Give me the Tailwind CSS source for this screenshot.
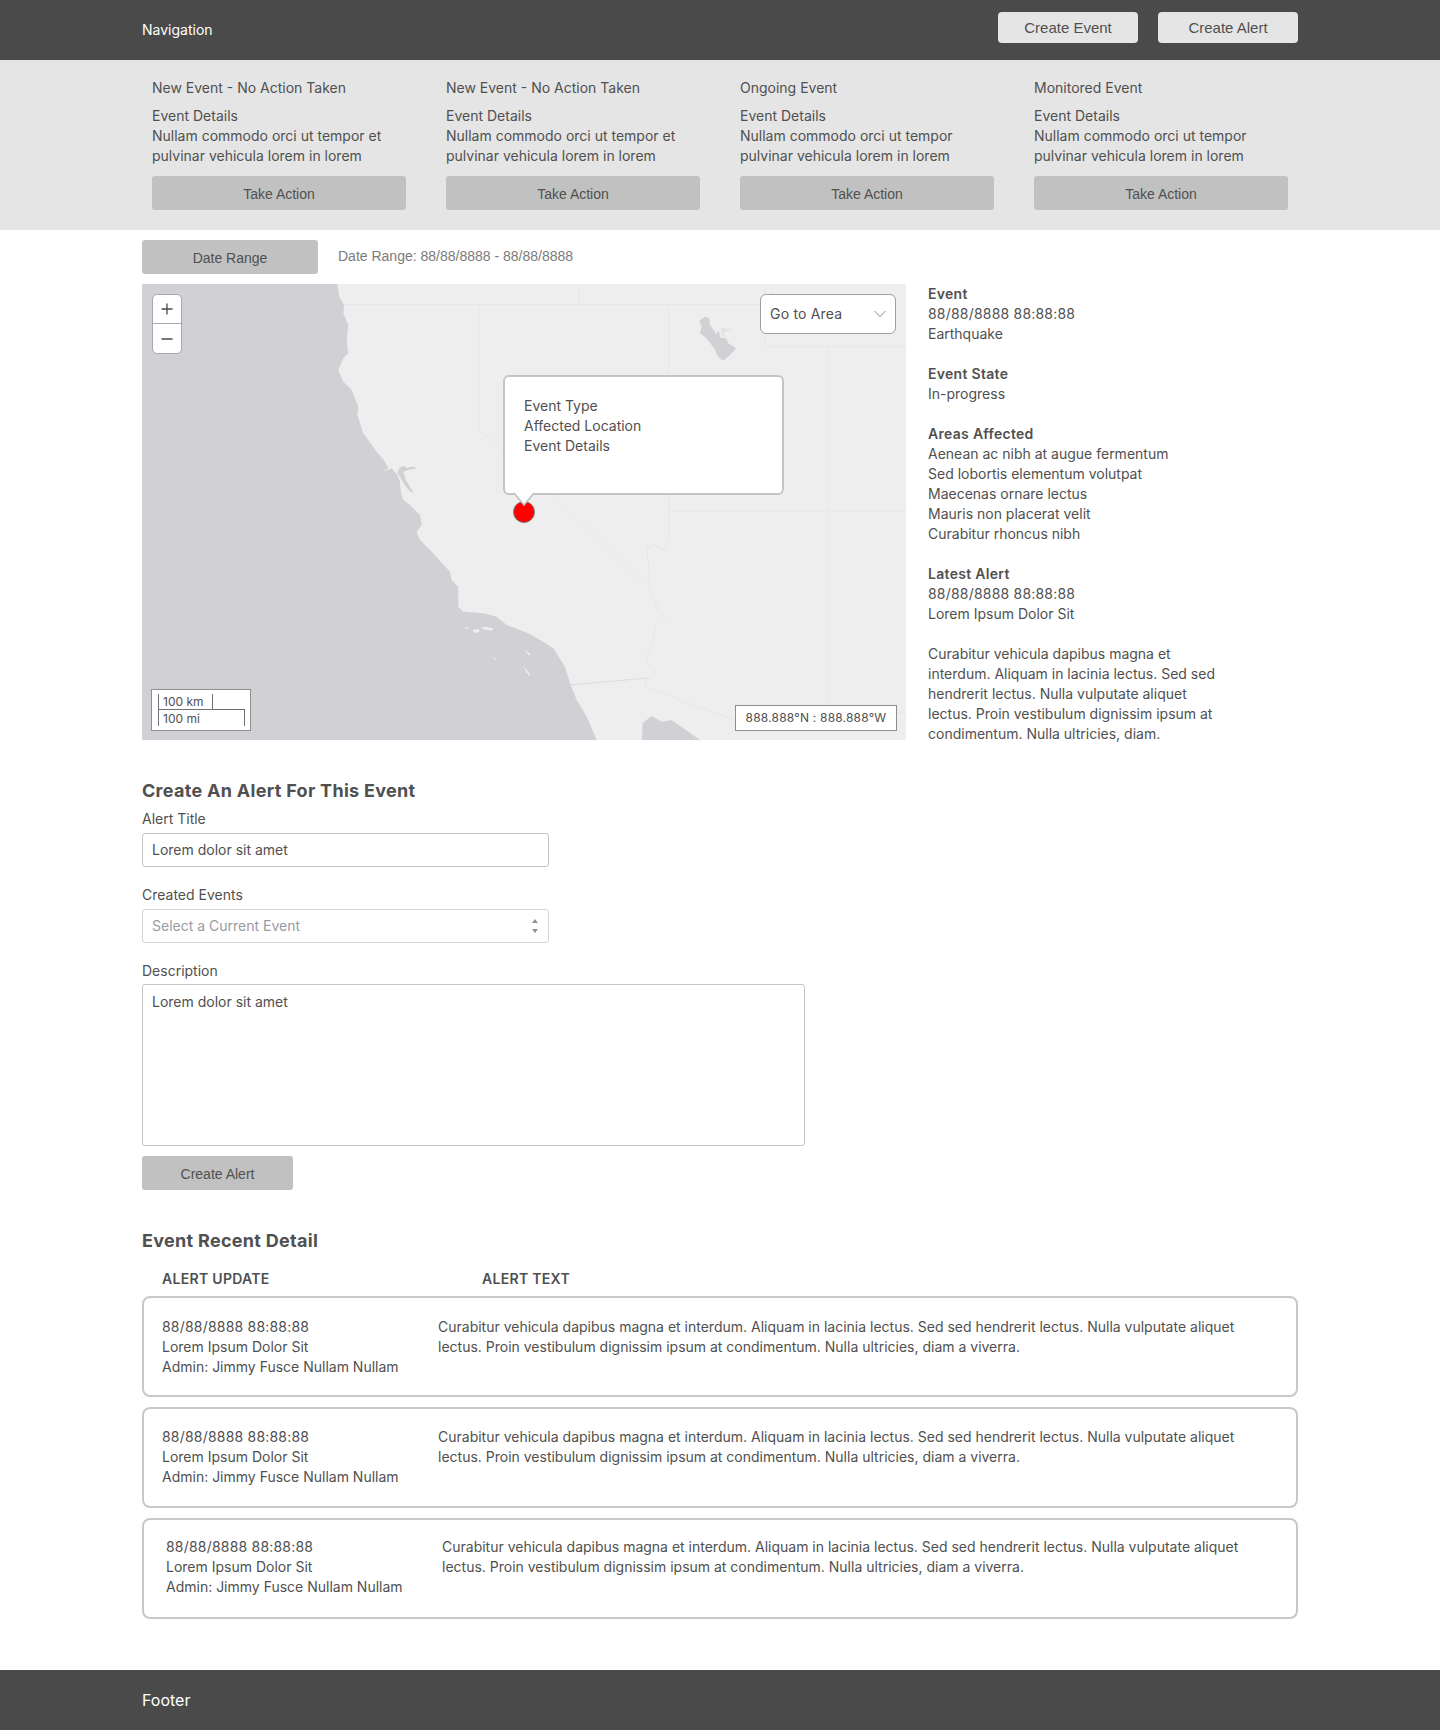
<!DOCTYPE html>
<html lang="en">
<head>
<meta charset="utf-8">
<title>Event dashboard</title>
<script src="https://cdn.jsdelivr.net/npm/@tailwindcss/browser@4"></script>
</head>
<body class="bg-white font-['Inter',sans-serif] text-sm leading-5 text-[#505050]">
<header class="h-[60px] bg-[#4a4a4a] px-[142px] flex items-start justify-between">
  <div class="text-white mt-5">Navigation</div>
  <div class="flex gap-5 mt-3">
    <button class="w-[140px] h-[31px] rounded bg-[#e5e5e5] font-['Liberation_Sans',sans-serif] text-[15px]">Create Event</button>
    <button class="w-[140px] h-[31px] rounded bg-[#e5e5e5] font-['Liberation_Sans',sans-serif] text-[15px]">Create Alert</button>
  </div>
</header>
<section class="h-[170px] bg-[#e5e5e5] px-[152px] pt-[18px] grid grid-cols-4 gap-x-10">
  <div>
    <div>New Event - No Action Taken</div>
    <div class="mt-2">Event Details<br>Nullam commodo orci ut tempor et<br>pulvinar vehicula lorem in lorem</div>
    <button class="mt-[10px] w-full h-[34px] pt-[2px] rounded-[3px] bg-[#c1c1c1] font-['Liberation_Sans',sans-serif]">Take Action</button>
  </div>
  <div>
    <div>New Event - No Action Taken</div>
    <div class="mt-2">Event Details<br>Nullam commodo orci ut tempor et<br>pulvinar vehicula lorem in lorem</div>
    <button class="mt-[10px] w-full h-[34px] pt-[2px] rounded-[3px] bg-[#c1c1c1] font-['Liberation_Sans',sans-serif]">Take Action</button>
  </div>
  <div>
    <div>Ongoing Event</div>
    <div class="mt-2">Event Details<br>Nullam commodo orci ut tempor<br>pulvinar vehicula lorem in lorem</div>
    <button class="mt-[10px] w-full h-[34px] pt-[2px] rounded-[3px] bg-[#c1c1c1] font-['Liberation_Sans',sans-serif]">Take Action</button>
  </div>
  <div>
    <div>Monitored Event</div>
    <div class="mt-2">Event Details<br>Nullam commodo orci ut tempor<br>pulvinar vehicula lorem in lorem</div>
    <button class="mt-[10px] w-full h-[34px] pt-[2px] rounded-[3px] bg-[#c1c1c1] font-['Liberation_Sans',sans-serif]">Take Action</button>
  </div>
</section>
<main class="px-[142px]">
  <div class="mt-[10px] flex items-start">
    <button class="w-[176px] h-[34px] pt-[2px] rounded-[3px] bg-[#c1c1c1] font-['Liberation_Sans',sans-serif]">Date Range</button>
    <span class="ml-5 mt-[6px] font-['Liberation_Sans',sans-serif] text-[#7b7b7b]">Date Range: 88/88/8888 - 88/88/8888</span>
  </div>
  <div class="mt-[10px] flex">
    <div class="relative w-[764px] h-[456px] overflow-hidden bg-[#eeeeee]">
      <svg class="absolute inset-0" width="764" height="456" viewBox="142 284 764 456" fill="none">
        <g stroke="#e7e7e7" stroke-width="1">
          <path d="M343 304.5H765M773 284V304.5M579 284V304.5M479 304.5V430L506 451.700M551 494L610 550L650 588M669 304.500V541"/>
          <path d="M765 284V346.500H906M828 346.500V705M669 511H906M669 541L663 550L655 545L647 548L648 560L650 588L658 610L666 617L655 627L653 643L647 655L648 663L655 670L652 677L647 678"/>
          <path d="M647 678L645 687L735 720M897 713H906"/>
        </g>
        <path d="M570 685L647 678" stroke="#dcdcdc"/>
        <path fill="#d0d0d5" d="M142 284H337.300L339.300 296.700L344 305L343.300 313.300L348.300 325L346.700 341.700L348.300 353.300L343.300 358.300L338.300 370L343.300 381.700L351.700 390L358.300 406.700L357.300 415L363.300 433.300L376.700 451.700L385 461.700L388.300 468L383.300 471.700L391.700 468.300L397.300 475L400 481.700L401 493L403.300 500L410 505L420 515L421.700 525L416.700 531.700L420 540L431.700 551.700L450 571.700L451.700 580L458.300 586.700L458.300 606.700L463.300 611.700L483.300 613.300L496.700 616.700L506.700 625L530 634L540 640L553.300 648.300L565 666.700L570 683.300L576.700 700L586.700 716.700L596.700 740H142Z"/>
        <g transform="translate(370 450) scale(.33333)" fill="#d0d0d5">
          <path d="M82 68L90 52L103 48L110 54L128 50L142 55L128 57L112 60L100 66L108 90L132 132L118 122L102 102L92 85Z"/>
        </g>
        <g transform="translate(690 310) scale(.33333)" fill="#d0d0d5">
          <path d="M28 32L45 20L58 25L60 45L72 62L78 72L86 62L92 84L108 85L115 100L138 115L120 135L100 152L85 140L72 115L50 85L30 70L35 50Z"/>
          <path d="M92 52L125 60L102 66L104 84L95 72Z" fill="#e2e2e5"/>
        </g>
        <g transform="translate(130 500) scale(.33333)" fill="#eeeeee">
          <path d="M1003 380L1018 383L1014 386L1005 384ZM1026 390L1045 387L1050 394L1036 400ZM1055 380L1090 384L1086 392L1060 388ZM1088 471L1100 476L1098 480ZM1180 498L1200 522V528L1188 516ZM1180 449L1200 460V468L1190 458Z"/>
        </g>
        <g transform="translate(530 500) scale(.33333)" fill="#d0d0d5">
          <path d="M336 720L338 670L365 648L395 665L425 660L460 685L510 720Z"/>
        </g>
      </svg>
      <div class="absolute left-[10px] top-[10px] w-[30px] h-[60px] rounded-[5px] bg-white border border-[#a8a8a8] flex flex-col overflow-hidden">
        <div class="h-[29px] border-b border-[#a8a8a8] flex items-center justify-center">
          <svg width="14" height="14" viewBox="0 0 14 14"><path d="M7 1.500V12.500M1.500 7H12.500" stroke="#4a4a4a" stroke-width="1.300"/></svg>
        </div>
        <div class="flex-1 flex items-center justify-center">
          <svg width="14" height="14" viewBox="0 0 14 14"><path d="M1.500 7H12.500" stroke="#4a4a4a" stroke-width="1.300"/></svg>
        </div>
      </div>
      <div class="absolute left-[618px] top-[10px] w-[136px] h-[40px] rounded-[6px] bg-white border border-[#a0a0a0] flex items-center justify-between pl-[9px] pr-[8px]">
        <span class="tracking-[0.2px]">Go to Area</span>
        <svg width="14" height="10" viewBox="0 0 14 10"><path d="M1.500 2L7 7.500L12.500 2" fill="none" stroke="#8a8a8a" stroke-width="1"/></svg>
      </div>
      <div class="absolute left-[371px] top-[217px] w-[22px] h-[22px] rounded-full bg-[#ff0000] border border-[#777777]"></div>
      <div class="absolute left-[361px] top-[91px] w-[281px] h-[120px] rounded-[6px] bg-white border-2 border-[#c4c4c4] pl-[19px] pt-[19px]">
        Event Type<br>Affected Location<br>Event Details
      </div>
      <svg class="absolute left-[369px] top-[208px]" width="26" height="16" viewBox="0 0 26 16"><path d="M2 0L13 13.500L24 0Z" fill="#ffffff"/><path d="M3 1L13 13L23 1" fill="none" stroke="#c0c0c0" stroke-width="1.500"/></svg>
      <div class="absolute left-[9px] top-[405px] w-[100px] h-[42px] bg-white border border-[#8f8f8f] text-xs leading-4">
        <div class="absolute left-[6px] top-[4px] w-[55px] h-[16px] border-l border-r border-[#707070] pl-[4px]">100 km</div>
        <div class="absolute left-[6px] top-[19px] w-[87px] h-[17px] border-l border-r border-t border-[#707070] pl-[4px] leading-[17px]">100 mi</div>
      </div>
      <div class="absolute left-[593px] top-[421px] w-[162px] h-[26px] bg-white border border-[#8f8f8f] text-xs flex items-center justify-center tracking-[0.2px]">888.888°N : 888.888°W</div>
    </div>
    <aside class="ml-[22px] w-[300px]">
      <div class="font-semibold tracking-[0.3px]">Event</div>
      <div class="tracking-[0.2px]">88/88/8888 88:88:88</div>
      <div>Earthquake</div>
      <div class="font-semibold tracking-[0.3px] mt-5">Event State</div>
      <div>In-progress</div>
      <div class="font-semibold tracking-[0.3px] mt-5">Areas Affected</div>
      <div>Aenean ac nibh at augue fermentum</div>
      <div>Sed lobortis elementum volutpat</div>
      <div>Maecenas ornare lectus</div>
      <div>Mauris non placerat velit</div>
      <div>Curabitur rhoncus nibh</div>
      <div class="font-semibold tracking-[0.3px] mt-5">Latest Alert</div>
      <div class="tracking-[0.2px]">88/88/8888 88:88:88</div>
      <div>Lorem Ipsum Dolor Sit</div>
      <p class="mt-5">Curabitur vehicula dapibus magna et<br>interdum. Aliquam in lacinia lectus. Sed sed<br>hendrerit lectus. Nulla vulputate aliquet<br>lectus. Proin vestibulum dignissim ipsum at<br>condimentum. Nulla ultricies, diam.</p>
    </aside>
  </div>
  <form class="mt-[33px]">
    <h2 class="text-lg leading-7 font-bold tracking-[0.3px]">Create An Alert For This Event</h2>
    <label class="block mt-1">Alert Title</label>
    <input class="block mt-1 w-[407px] h-[34px] px-[9px] pb-[2px] rounded-[3px] border border-[#c4c4cc] bg-white outline-none text-sm" value="Lorem dolor sit amet">
    <label class="block mt-[18px]">Created Events</label>
    <div class="relative mt-1 w-[407px] h-[34px]">
      <select class="block w-full h-full px-[9px] rounded-[3px] border border-[#d4d4d8] bg-white text-[#9a9aa4] appearance-none outline-none"><option>Select a Current Event</option></select>
      <svg class="absolute right-[10px] top-[9px]" width="8" height="16" viewBox="0 0 8 16"><path d="M4 1L7 5H1ZM4 15L1 11H7Z" fill="#8f8fa0"/></svg>
    </div>
    <label class="block mt-[18px]">Description</label>
    <textarea class="block mt-[3px] w-[663px] h-[162px] px-[9px] py-[7px] rounded-[3px] border border-[#c4c4cc] bg-white outline-none resize-none">Lorem dolor sit amet</textarea>
    <button type="button" class="block mt-[10px] w-[151px] h-[34px] pt-[2px] rounded-[3px] bg-[#c1c1c1] font-['Liberation_Sans',sans-serif]">Create Alert</button>
  </form>
  <h2 class="mt-[37px] text-lg leading-7 font-bold tracking-[0.3px]">Event Recent Detail</h2>
  <div class="mt-[14px] flex font-semibold tracking-[0.3px]">
    <div class="ml-5 w-[320px]">ALERT UPDATE</div>
    <div>ALERT TEXT</div>
  </div>
  <div class="mt-[7px] flex flex-col gap-[10px]">
    <article class="h-[101px] rounded-lg border-2 border-[#c8c8c8] pl-[18px] pt-[19px] flex">
      <div class="w-[276px]"><span class="tracking-[0.2px]">88/88/8888 88:88:88</span><br>Lorem Ipsum Dolor Sit<br>Admin: Jimmy Fusce Nullam Nullam</div>
      <div>Curabitur vehicula dapibus magna et interdum. Aliquam in lacinia lectus. Sed sed hendrerit lectus. Nulla vulputate aliquet<br>lectus. Proin vestibulum dignissim ipsum at condimentum. Nulla ultricies, diam a viverra.</div>
    </article>
    <article class="h-[101px] rounded-lg border-2 border-[#c8c8c8] pl-[18px] pt-[18px] flex">
      <div class="w-[276px]"><span class="tracking-[0.2px]">88/88/8888 88:88:88</span><br>Lorem Ipsum Dolor Sit<br>Admin: Jimmy Fusce Nullam Nullam</div>
      <div>Curabitur vehicula dapibus magna et interdum. Aliquam in lacinia lectus. Sed sed hendrerit lectus. Nulla vulputate aliquet<br>lectus. Proin vestibulum dignissim ipsum at condimentum. Nulla ultricies, diam a viverra.</div>
    </article>
    <article class="h-[101px] rounded-lg border-2 border-[#c8c8c8] pl-[22px] pt-[17px] flex">
      <div class="w-[276px]"><span class="tracking-[0.2px]">88/88/8888 88:88:88</span><br>Lorem Ipsum Dolor Sit<br>Admin: Jimmy Fusce Nullam Nullam</div>
      <div>Curabitur vehicula dapibus magna et interdum. Aliquam in lacinia lectus. Sed sed hendrerit lectus. Nulla vulputate aliquet<br>lectus. Proin vestibulum dignissim ipsum at condimentum. Nulla ultricies, diam a viverra.</div>
    </article>
  </div>
</main>
<footer class="mt-[51px] h-[60px] bg-[#4a4a4a] px-[142px] flex items-center text-white text-base">Footer</footer>
</body>
</html>
